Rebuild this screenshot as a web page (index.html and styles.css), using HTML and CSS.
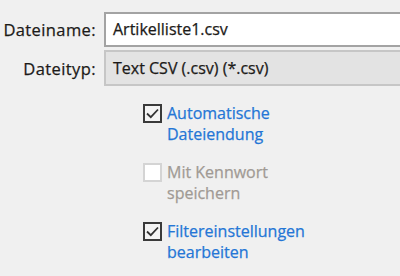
FILE: index.html
```html
<!DOCTYPE html>
<html>
<head>
  <link rel="stylesheet" href="styles.css">
</head>
<body>
  <div class="dialog">
    <div class="fields">
      <label class="field-label">Dateiname:</label>
      <div class="field field-input">Artikelliste1.csv</div>
      <label class="field-label">Dateityp:</label>
      <div class="field field-select">Text CSV (.csv) (*.csv)</div>
    </div>
    <ul class="options">
      <li class="option">
        <span class="check checked">
          <svg width="15" height="15" viewBox="0 0 15 15"><path d="M2 7.5 L5.8 11.2 L13 3.5" fill="none" stroke="#333" stroke-width="1.8"/></svg>
        </span>
        <span class="option-text">Automatische<br>Dateiendung</span>
      </li>
      <li class="option disabled">
        <span class="check"></span>
        <span class="option-text">Mit Kennwort<br>speichern</span>
      </li>
      <li class="option">
        <span class="check checked">
          <svg width="15" height="15" viewBox="0 0 15 15"><path d="M2 7.5 L5.8 11.2 L13 3.5" fill="none" stroke="#333" stroke-width="1.8"/></svg>
        </span>
        <span class="option-text">Filtereinstellungen<br>bearbeiten</span>
      </li>
    </ul>
  </div>
</body>
</html>
```

FILE: styles.css
```css
html, body {
  margin: 0;
  padding: 0;
  background-color: #f0f0f0;
  overflow: hidden;
}

.dialog {
  width: 400px;
  height: 276px;
  font-family: "Open Sans", "Noto Sans", sans-serif;
  font-size: 16px;
  color: #1c1a18;
  -webkit-text-stroke: 0.25px;
  overflow: hidden;
}

.fields {
  display: grid;
  grid-template-columns: 96px 320px;
  column-gap: 8px;
  row-gap: 3px;
  padding-top: 12px;
  align-items: center;
}

.field-label {
  text-align: right;
  font-size: 16.5px;
  letter-spacing: 0.4px;
}

.field {
  box-sizing: border-box;
  height: 35px;
  line-height: 31px;
  padding-left: 7px;
  white-space: nowrap;
}

.field-input {
  background-color: #fff;
  border: 2px solid #a3a3a3;
}

.field-select {
  height: 36px;
  line-height: 32px;
  background-color: #e3e3e3;
  border: 2px solid #c6c6c6;
}

.options {
  list-style-type: none;
  margin: 0;
  padding: 17px 0 0 143px;
}

.option {
  display: flex;
  align-items: flex-start;
  gap: 5px;
  margin-bottom: 17px;
  color: #2476d6;
}

.option.disabled {
  color: #a09a94;
}

.check {
  box-sizing: border-box;
  width: 19px;
  height: 19px;
  margin-top: 1px;
  border: 2px solid #d4d4d4;
  background-color: #fff;
  display: flex;
  align-items: center;
  justify-content: center;
  flex: none;
}

.check.checked {
  border-color: #3a3a3a;
  background-color: #f4f4f4;
}

.option-text {
  line-height: 21px;
}
```
